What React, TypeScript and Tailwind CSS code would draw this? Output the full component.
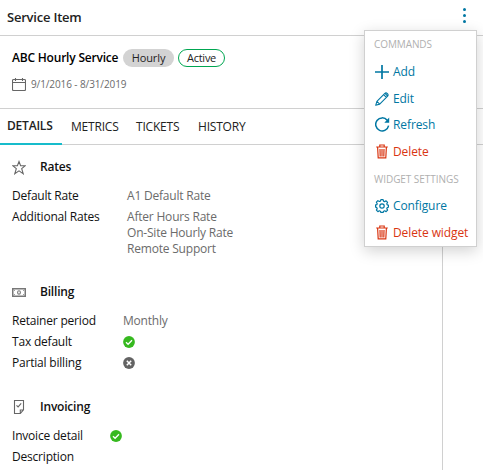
import type { ReactNode } from "react";

type IconProps = { className?: string };

const CalendarIcon = () => (
  <svg width="14" height="13" viewBox="0 0 14 13" fill="none" stroke="#666" strokeWidth="1.1" className="block">
    <rect x="0.5" y="1.5" width="13" height="11" rx="1" />
    <path d="M0.5 4.5h13M3.5 0v3M10.5 0v3" />
  </svg>
);

const StarIcon = () => (
  <svg width="14" height="15" viewBox="0 0 14 15" fill="none" stroke="#666" strokeWidth="1.1" className="block">
    <path d="M7 1.5l1.6 4.1 4.7.1L9.7 8.7l1.5 4.9L7 10.8l-4.2 2.8 1.5-4.9L.7 5.7l4.7-.1z" />
  </svg>
);

const MoneyIcon = () => (
  <svg width="14" height="9" viewBox="0 0 14 9" fill="none" stroke="#777" className="block">
    <rect x="0.75" y="0.75" width="12.5" height="7.5" strokeWidth="1.5" />
    <ellipse cx="7" cy="4.5" rx="1.4" ry="1.7" strokeWidth="1.1" />
    <path d="M2.5 2v1M11.5 2v1M2.5 6v1M11.5 6v1" strokeWidth="0.7" />
  </svg>
);

const InvoiceIcon = () => (
  <svg width="14" height="14" viewBox="0 0 14 14" fill="none" stroke="#666" strokeWidth="1.1" className="block">
    <path d="M2.5 .5h9v9.3l-3.2 3.7H2.5zM8.3 13.3V10h3.2" />
    <path d="M4.5 5.3l1.6 1.6L9.2 3.4" />
  </svg>
);

const CheckBadge = () => (
  <svg width="12" height="12" viewBox="0 0 12 12" className="block">
    <circle cx="6" cy="6" r="5.9" fill="#36b91f" />
    <path d="M3 6.2l2.1 2.1L9 4.2" fill="none" stroke="#fff" strokeWidth="1.3" />
  </svg>
);

const CrossBadge = () => (
  <svg width="12" height="12" viewBox="0 0 12 12" className="block">
    <circle cx="6" cy="6" r="5.9" fill="#636363" />
    <path d="M3.8 3.8l4.4 4.4M8.2 3.8L3.8 8.2" stroke="#fff" strokeWidth="1.5" />
  </svg>
);

const PlusIcon = () => (
  <svg width="14" height="14" viewBox="0 0 14 14" stroke="#0077a3" strokeWidth="1.7" className="block">
    <path d="M7 0v14M0 7h14" />
  </svg>
);

const PencilIcon = () => (
  <svg width="14" height="14" viewBox="0 0 14 14" fill="none" stroke="#0077a3" strokeWidth="1.1" strokeLinejoin="round" className="block">
    <path d="M.7 13.3l1.2-4L9.6 1.6Q11 .3 12.4 1.6T12.4 4.4L4.7 12.1zM1.9 9.3l2.8 2.8M8.6 2.6l2.8 2.8M10 1.4l2.6 2.6" />
  </svg>
);

const RefreshIcon = () => (
  <svg width="15" height="15" viewBox="0 0 15 15" fill="none" stroke="#0077a3" strokeWidth="1.5" className="block">
    <path d="M13.6 8.6A6.5 6.5 0 1 1 12.2 3.2" />
    <path d="M14.2 .6v5.1H9.3z" fill="#0077a3" stroke="none" />
  </svg>
);

const TrashIcon = () => (
  <svg width="14" height="15" viewBox="0 0 14 15" fill="none" stroke="#d93511" strokeWidth="1.2" className="block">
    <path d="M1.2 3h11.6M4.8 2.8V1h4.4v1.8M2.6 3.2l.6 10.7h7.6l.6-10.7M5 5l.2 7.4M7 5v7.4M9 5l-.2 7.4" />
  </svg>
);

const GearIcon = () => (
  <svg width="14" height="14" viewBox="0 0 14 14" fill="none" stroke="#0077a3" strokeWidth="1.2" strokeLinejoin="round" className="block">
    <path d="M5.9 .6h2.2l.5 1.6 1 .4 1.5-.8 1.5 1.5-.8 1.5.4 1 1.2.2v2.2l-1.2.4-.4 1 .8 1.5-1.5 1.5-1.5-.8-1 .4-.5 1.2H5.9l-.5-1.2-1-.4-1.5.8-1.5-1.5.8-1.5-.4-1L.6 8.1V5.9l1.2-.2.4-1-.8-1.5 1.5-1.5 1.5.8 1-.4z" />
    <circle cx="7" cy="7" r="2.2" />
  </svg>
);

function MenuItem({ icon, label, className }: { icon: ReactNode; label: string } & IconProps) {
  return (
    <button className={`flex h-[27px] w-full items-center gap-[4px] whitespace-nowrap pl-[10px] text-[12px] font-medium leading-4 tracking-[-0.1px] ${className}`}>
      <span className="w-[14px] shrink-0">{icon}</span>
      <span>{label}</span>
    </button>
  );
}

function SectionTitle({ icon, title }: { icon: ReactNode; title: string }) {
  return (
    <h2 className="flex h-4 items-center gap-[14px] text-[12px] font-semibold leading-4 tracking-[-0.2px] text-[#111]">
      <span className="w-[14px]">{icon}</span>
      {title}
    </h2>
  );
}

function Row({ label, width, children }: { label: string; width: string; children?: ReactNode }) {
  return (
    <div className="mb-[5px] flex text-[12px] leading-4 tracking-[-0.2px]">
      <dt className={`${width} shrink-0 text-[#111]`}>{label}</dt>
      <dd className="flex flex-col justify-center text-[#6b6b6b]">{children}</dd>
    </div>
  );
}

export default function App() {
  return (
    <div className="relative h-[470px] w-[483px] overflow-hidden bg-white font-['Open_Sans','Noto_Sans',sans-serif] text-[#222]">
      <header className="flex h-9 items-center justify-between border-b border-[#d0d0d0] pl-[7px] pr-[17px]">
        <h1 className="mb-0.5 text-[13px] font-semibold leading-4 tracking-[-0.22px]">Service Item</h1>
        <button aria-label="Commands" className="mb-1 flex flex-col gap-[3px]">
          <i className="size-[3px] rounded-full bg-[#0077a3]" />
          <i className="size-[3px] rounded-full bg-[#0077a3]" />
          <i className="size-[3px] rounded-full bg-[#0077a3]" />
        </button>
      </header>

      <section className="h-[73px] border-b border-[#d0d0d0] pl-3 pt-[13px]">
        <div className="flex h-[18px] items-center">
          <span className="w-[111px] whitespace-nowrap text-[12px] font-semibold tracking-[-0.2px] text-black">ABC Hourly Service</span>
          <span className="flex h-[18px] w-[51px] items-center justify-center rounded-full bg-[#d3d3d3] text-[11px] tracking-[-0.1px]">Hourly</span>
          <span className="ml-1 flex h-[18px] w-[47px] items-center justify-center rounded-full border border-[#00a651] text-[11px] font-medium tracking-[-0.25px]">Active</span>
        </div>
        <div className="mt-[9px] flex h-4 items-center gap-[5px] text-[10px] tracking-[-0.1px] text-[#6b6b6b]">
          <CalendarIcon />
          <span>9/1/2016 - 8/31/2019</span>
        </div>
      </section>

      <nav className="flex h-9 border-b border-[#d0d0d0] text-[12px] leading-[35px] tracking-[-0.2px]">
        <span className="-mb-px w-[62px] border-b-2 border-[#17bccb] pl-[7px] font-semibold leading-[34px]">DETAILS</span>
        <span className="w-[65px] pl-[9px]">METRICS</span>
        <span className="w-[62px] pl-[9px]">TICKETS</span>
        <span className="pl-[9px]">HISTORY</span>
      </nav>

      <main className="h-[325px] w-[443px] border-r border-[#d0d0d0] pl-3 pt-[14px]">
        <SectionTitle icon={<StarIcon />} title="Rates" />
        <dl className="mt-[13px]">
          <Row label="Default Rate" width="w-[115px]">A1 Default Rate</Row>
          <Row label="Additional Rates" width="w-[115px]">
            <span>After Hours Rate</span>
            <span>On-Site Hourly Rate</span>
            <span>Remote Support</span>
          </Row>
        </dl>
        <div className="h-[22px]" />
        <SectionTitle icon={<MoneyIcon />} title="Billing" />
        <dl className="mt-[13px]">
          <Row label="Retainer period" width="w-[111px]">Monthly</Row>
          <Row label="Tax default" width="w-[111px]"><CheckBadge /></Row>
          <Row label="Partial billing" width="w-[111px]"><CrossBadge /></Row>
        </dl>
        <div className="h-[23px]" />
        <SectionTitle icon={<InvoiceIcon />} title="Invoicing" />
        <dl className="mt-[13px]">
          <Row label="Invoice detail" width="w-[98px]"><CheckBadge /></Row>
          <Row label="Description" width="w-[98px]" />
        </dl>
      </main>

      <aside className="absolute left-[364px] top-[30px] h-[217px] w-[113px] border border-[#d0d0d0] bg-white shadow-[0_4px_14px_rgba(0,0,0,0.18)]">
        <h3 className="h-[27px] pl-[9px] pt-[5px] text-[10px] leading-4 tracking-[-0.1px] text-[#b0b0b0]">COMMANDS</h3>
        <MenuItem className="text-[#0077a3]" icon={<PlusIcon />} label="Add" />
        <MenuItem className="text-[#0077a3]" icon={<PencilIcon />} label="Edit" />
        <MenuItem className="-mt-px text-[#0077a3]" icon={<RefreshIcon />} label="Refresh" />
        <MenuItem className="text-[#d93511]" icon={<TrashIcon />} label="Delete" />
        <h3 className="h-[27px] whitespace-nowrap pl-[9px] pt-[6px] text-[10px] leading-4 tracking-[-0.05px] text-[#b0b0b0]">WIDGET SETTINGS</h3>
        <MenuItem className="text-[#0077a3]" icon={<GearIcon />} label="Configure" />
        <MenuItem className="text-[#d93511]" icon={<TrashIcon />} label="Delete widget" />
      </aside>
    </div>
  );
}
